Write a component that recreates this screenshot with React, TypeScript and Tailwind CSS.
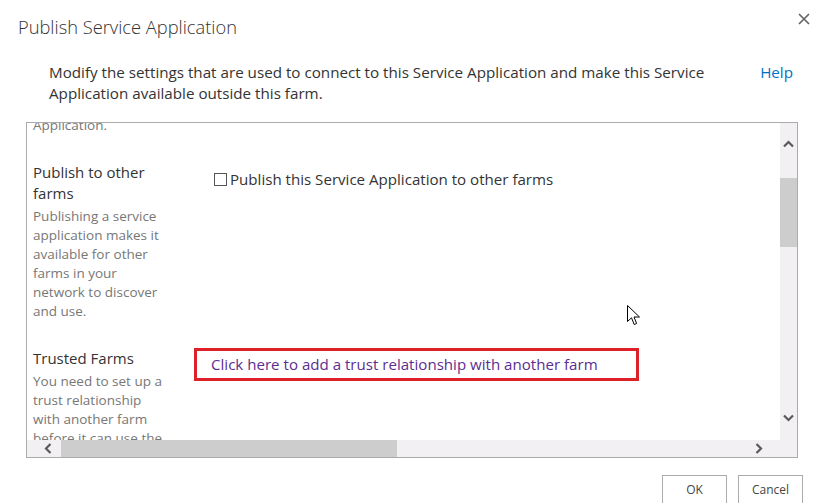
const FONT = "font-['Open_Sans','Noto_Sans',sans-serif]";

function Chevron({ dir }: { dir: 'up' | 'down' | 'left' | 'right' }) {
  const pts = {
    up: '1,6.5 5.5,2 10,6.5',
    down: '1,1.5 5.5,6 10,1.5',
    left: '6.5,1 2,5.5 6.5,10',
    right: '1.5,1 6,5.5 1.5,10',
  }[dir];
  const vertical = dir === 'up' || dir === 'down';
  return (
    <svg width={vertical ? 11 : 8} height={vertical ? 8 : 11} viewBox={vertical ? '0 0 11 8' : '0 0 8 11'}>
      <polyline points={pts} fill="none" stroke="#5a5a5a" strokeWidth="2.2" />
    </svg>
  );
}

function Section({
  title,
  lines,
  children,
}: {
  title: string[];
  lines: string[];
  children: React.ReactNode;
}) {
  return (
    <div className="flex">
      <div className="w-[167px] shrink-0 pl-[6px]">
        {title.map((t) => (
          <div key={t} className="text-[15px] leading-[21px] text-[#333]">
            {t}
          </div>
        ))}
        <div className="mt-[3px]">
          {lines.map((l) => (
            <div key={l} className="text-[13.5px] leading-[19px] text-[#777] whitespace-nowrap">
              {l}
            </div>
          ))}
        </div>
      </div>
      <div className="flex-1">{children}</div>
    </div>
  );
}

export default function App() {
  return (
    <div className={`w-[813px] h-[503px] bg-white relative overflow-hidden ${FONT}`}>
      {/* header */}
      <div className="flex items-start justify-between pl-[18px] pr-[3px] pt-[13px]">
        <h1 className="text-[18.3px] leading-[27px] font-light text-[#333]">Publish Service Application</h1>
        <button className="w-[12px] h-[12px] mt-[0px]">
          <svg width="12" height="12" viewBox="0 0 12 12">
            <path d="M1 1 L11 11 M11 1 L1 11" stroke="#666" strokeWidth="1.7" />
          </svg>
        </button>
      </div>

      <div className="flex items-start justify-between pl-[49px] pr-[20px] mt-[22px]">
        <p className="w-[690px] text-[15.2px] leading-[21px] text-[#333]">
          Modify the settings that are used to connect to this Service Application and make this Service Application
          available outside this farm.
        </p>
        <a className="text-[15.2px] leading-[21px] text-[#0072c6]">Help</a>
      </div>

      {/* scroll box */}
      <div className="ml-[26px] mt-[18px] w-[772px] h-[336px] border border-[#ababab] flex flex-col">
        <div className="flex flex-1 min-h-0">
          <div className="flex-1 overflow-hidden">
            <div className="mt-[-7px] pl-[6px]">
              <div className="text-[13.5px] leading-[19px] text-[#777]">Application.</div>
            </div>
            <div className="mt-[27px]">
              <Section
                title={['Publish to other', 'farms']}
                lines={[
                  'Publishing a service',
                  'application makes it',
                  'available for other',
                  'farms in your',
                  'network to discover',
                  'and use.',
                ]}
              >
                <label className="flex items-center gap-[3px] mt-[7px] ml-[20px] text-[15.1px] leading-[21px] text-[#333] whitespace-nowrap">
                  <span className="w-[13px] h-[13px] border border-[#555] bg-white" />
                  Publish this Service Application to other farms
                </label>
              </Section>
            </div>
            <div className="mt-[27px]">
              <Section
                title={['Trusted Farms']}
                lines={['You need to set up a', 'trust relationship', 'with another farm', 'before it can use the']}
              >
                <div className="w-[445px] h-[33px] border-[3px] border-[#de2128] flex items-center pl-[14px]">
                  <a className="text-[15.1px] text-[#5c2d91] whitespace-nowrap">
                    Click here to add a trust relationship with another farm
                  </a>
                </div>
              </Section>
            </div>
          </div>
          {/* vertical scrollbar */}
          <div className="w-[17px] bg-[#f3f0f3] flex flex-col">
            <div className="h-[34px] flex justify-center pt-[17px]">
              <Chevron dir="up" />
            </div>
            <div className="h-[21px]" />
            <div className="h-[69px] bg-[#cdcdcd]" />
            <div className="flex-1" />
            <div className="h-[34px] flex justify-center items-end pb-[18px]">
              <Chevron dir="down" />
            </div>
          </div>
        </div>
        {/* horizontal scrollbar */}
        <div className="h-[17px] flex bg-[#f3f0f3]">
          <div className="w-[34px] flex items-center justify-end pr-[9px]">
            <Chevron dir="left" />
          </div>
          <div className="w-[336px] bg-[#cdcdcd]" />
          <div className="flex-1" />
          <div className="w-[34px] flex items-center pl-[9px]">
            <Chevron dir="right" />
          </div>
          <div className="w-[17px]" />
        </div>
      </div>

      {/* footer */}
      <div className="flex justify-end gap-[11px] pr-[10px] mt-[17px]">
        <button className="w-[65px] h-[30px] border border-[#ababab] bg-white text-[12px] text-[#444]">OK</button>
        <button className="w-[65px] h-[30px] border border-[#ababab] bg-white text-[12px] text-[#444]">Cancel</button>
      </div>

      {/* mouse pointer */}
      <svg className="absolute left-[627px] top-[305px]" width="14" height="22" viewBox="0 0 14 22">
        <path
          d="M0.5 0.5 L0.5 16.5 L4.5 12.8 L7.2 19.5 L9.6 18.5 L7 12 L12.5 12 Z"
          fill="white"
          stroke="black"
          strokeWidth="1"
          strokeLinejoin="miter"
        />
      </svg>
    </div>
  );
}
